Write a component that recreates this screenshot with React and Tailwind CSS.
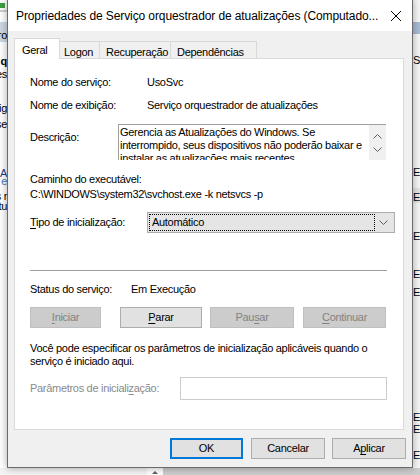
import React from "react";

const U = ({ children }) => <span className="underline underline-offset-[2px]">{children}</span>;

function Chevron({ up }) {
  return (
    <svg width="9" height="5" viewBox="0 0 9 5" className="block">
      <polyline
        points={up ? "0.5,4.5 4.5,0.5 8.5,4.5" : "0.5,0.5 4.5,4.5 8.5,0.5"}
        fill="none"
        stroke="#606060"
        strokeWidth="1"
      />
    </svg>
  );
}

export default function App() {
  return (
    <div className="relative w-[420px] h-[475px] overflow-hidden bg-white font-['Liberation_Sans',Arial,sans-serif] text-[11px] tracking-[-0.3px] text-black">
      {/* background behind the dialog: left strip */}
      <div className="absolute left-0 top-0 w-[7px] h-[475px] overflow-hidden bg-white">
        <div className="absolute left-0 top-[3px] w-[5px] h-[5px] bg-[#3f9f3f]" />
        <div className="absolute left-0 top-[10px] w-[7px] h-[2px] bg-[#d0d0d0]" />
        <div className="absolute left-0 top-[22px] w-[7px] h-[20px] bg-[#cfd8e2]" />
        <span className="absolute right-0 top-[27px] whitespace-nowrap">ro</span>
        <span className="absolute right-0 top-[53px] whitespace-nowrap font-bold">q</span>
        <span className="absolute right-0 top-[66px] whitespace-nowrap">es</span>
        <span className="absolute right-0 top-[100px] whitespace-nowrap">rig</span>
        <span className="absolute right-0 top-[116px] whitespace-nowrap">se</span>
        <span className="absolute right-0 top-[165px] whitespace-nowrap text-[#1a3c8c]">A</span>
        <span className="absolute right-0 top-[173px] whitespace-nowrap text-[#3c78c8]">e</span>
        <span className="absolute right-0 top-[188px] whitespace-nowrap">s r</span>
        <span className="absolute right-0 top-[198px] whitespace-nowrap">tu</span>
      </div>
      {/* right strip */}
      <div className="absolute right-0 top-0 w-[8px] h-[475px] overflow-hidden bg-[#f7f7f7]">
        <div className="absolute left-0 top-[22px] w-[8px] h-[12px] bg-[#a9bdd5]" />
        <span className="absolute left-[1px] top-[52px] whitespace-nowrap">St</span>
        <span className="absolute left-[1px] top-[164px] whitespace-nowrap">En</span>
        <div className="absolute left-0 top-[188px] w-[8px] h-[15px] bg-[#e5e5e5]" />
        <span className="absolute left-[1px] top-[189px] whitespace-nowrap">En</span>
        <span className="absolute left-[1px] top-[228px] whitespace-nowrap">En</span>
        <span className="absolute left-[1px] top-[266px] whitespace-nowrap">En</span>
        <span className="absolute left-[1px] top-[284px] whitespace-nowrap">En</span>
        <span className="absolute left-[1px] top-[409px] whitespace-nowrap">En</span>
        <span className="absolute left-[1px] top-[421px] whitespace-nowrap">En</span>
        <span className="absolute left-[1px] top-[447px] whitespace-nowrap">En</span>
        <span className="absolute left-[1px] top-[466px] whitespace-nowrap">En</span>
      </div>
      {/* bottom strip */}
      <div className="absolute left-0 top-[468px] w-[420px] h-[7px] flex">
        <div className="w-[147px] h-full bg-[#f4f4f4]" />
        <div className="w-[16px] h-full bg-white flex justify-center items-end">
          <div className="w-0 h-0 border-l-[3px] border-r-[3px] border-b-[3px] border-l-transparent border-r-transparent border-b-[#606060] mb-[1px]" />
        </div>
        <div className="flex-1 h-full bg-[#cdcdcd]" />
      </div>

      {/* dialog window */}
      <div className="absolute left-[7px] top-[-1px] w-[406px] h-[469px] border border-[#6b6b6b] bg-[#f0f0f0] shadow-[0_0_8px_rgba(0,0,0,0.35)] flex flex-col">
        {/* title bar */}
        <div className="h-[31px] bg-white flex items-center justify-between pl-[8px] pr-[11px] pt-[1px]">
          <span className="text-[12px] tracking-[-0.1px] whitespace-nowrap">
            Propriedades de Serviço orquestrador de atualizações (Computado...
          </span>
          <svg width="10" height="10" viewBox="0 0 10 10" className="block">
            <line x1="0" y1="0" x2="10" y2="10" stroke="#000" strokeWidth="1" />
            <line x1="10" y1="0" x2="0" y2="10" stroke="#000" strokeWidth="1" />
          </svg>
        </div>

        <div className="pl-[6px] pt-[7px] flex flex-col">
          {/* tabs */}
          <div className="flex items-end h-[20px]">
            <div className="relative z-10 h-[21px] -mb-[1px] w-[46px] bg-white border-t border-l border-r border-[#d9d9d9] pl-[7px] pt-[3px]">
              Geral
            </div>
            <div className="h-[17px] w-[40px] border-t border-r border-[#d9d9d9] pl-[4px] pt-[2px]">Logon</div>
            <div className="h-[17px] w-[71px] border-t border-r border-[#d9d9d9] pl-[6px] pt-[2px]">Recuperação</div>
            <div className="h-[17px] w-[86px] border-t border-r border-[#d9d9d9] pl-[6px] pt-[2px]">Dependências</div>
          </div>

          {/* panel */}
          <div className="w-[390px] h-[372px] bg-white border border-[#d9d9d9] pl-[15px] flex flex-col">
            <div className="mt-[16px] h-[14px] flex items-center">
              <span className="w-[117px]">Nome do serviço:</span>
              <span>UsoSvc</span>
            </div>
            <div className="mt-[9px] h-[14px] flex items-center">
              <span className="w-[117px]">Nome de exibição:</span>
              <span>Serviço orquestrador de atualizações</span>
            </div>
            <div className="mt-[12px] flex items-start">
              <span className="w-[88px] h-[14px] mt-[6px] flex items-center">Descrição:</span>
              <div className="w-[268px] h-[36px] border-t border-l border-[#a0a0a0] flex overflow-hidden">
                <div className="flex-1 pl-[1px] pt-[1px] leading-[13px] overflow-hidden">
                  Gerencia as Atualizações do Windows. Se
                  <br />
                  interrompido, seus dispositivos não poderão baixar e
                  <br />
                  instalar as atualizações mais recentes.
                </div>
                <div className="w-[17px] bg-[#f0f0f0] flex flex-col items-center pt-[9px] gap-[8px]">
                  <Chevron up />
                  <Chevron />
                </div>
              </div>
            </div>
            <div className="mt-[12px] h-[14px] flex items-center">Caminho do executável:</div>
            <div className="mt-[1px] h-[14px] flex items-center">C:\WINDOWS\system32\svchost.exe -k netsvcs -p</div>
            <div className="mt-[11px] flex items-center">
              <span className="w-[117px]">
                <U>T</U>ipo de inicialização:
              </span>
              <div className="w-[248px] h-[21px] bg-[#e5e5e5] border border-[#acacac] flex items-center pl-[1px] pr-[6px]">
                <div className="w-[226px] h-[17px] border border-dotted border-black flex items-center pl-[2px]">
                  Automático
                </div>
                <div className="flex-1 flex justify-end">
                  <Chevron />
                </div>
              </div>
            </div>
            <div className="mt-[37px] w-[357px] h-[1px] bg-[#a0a0a0]" />
            <div className="mt-[11px] h-[14px] flex items-center">
              <span className="w-[101px]">Status do serviço:</span>
              <span>Em Execução</span>
            </div>
            <div className="mt-[11px] flex h-[21px]">
              <div className="w-[71px] h-[21px] bg-[#cccccc] border border-[#bfbfbf] text-[#838383] flex items-center justify-center">
                <span><U>I</U>niciar</span>
              </div>
              <div className="ml-[19px] w-[82px] h-[21px] bg-[#e1e1e1] border border-[#adadad] flex items-center justify-center">
                <span><U>P</U>arar</span>
              </div>
              <div className="ml-[8px] w-[84px] h-[21px] bg-[#cccccc] border border-[#bfbfbf] text-[#838383] flex items-center justify-center">
                <span>Pau<U>s</U>ar</span>
              </div>
              <div className="ml-[9px] w-[83px] h-[21px] bg-[#cccccc] border border-[#bfbfbf] text-[#838383] flex items-center justify-center">
                <span><U>C</U>ontinuar</span>
              </div>
            </div>
            <div className="mt-[14px] leading-[13px]">
              Você pode especificar os parâmetros de inicialização aplicáveis quando o
              <br />
              serviço é iniciado aqui.
            </div>
            <div className="mt-[9px] flex items-center">
              <span className="w-[150px] text-[#8a8a8a]">
                Parâmetros de iniciali<U>z</U>ação:
              </span>
              <div className="w-[207px] h-[23px] border border-[#cccccc] bg-white" />
            </div>
          </div>

          {/* dialog buttons */}
          <div className="mt-[8px] flex pl-[156px]">
            <div className="w-[73px] h-[21px] bg-[#e1e1e1] border-2 border-[#0078d7] flex items-center justify-center">
              OK
            </div>
            <div className="ml-[8px] w-[74px] h-[21px] bg-[#e1e1e1] border border-[#adadad] flex items-center justify-center">
              Cancelar
            </div>
            <div className="ml-[7px] w-[74px] h-[21px] bg-[#e1e1e1] border border-[#adadad] flex items-center justify-center">
              <span>A<U>p</U>licar</span>
            </div>
          </div>
        </div>
      </div>
    </div>
  );
}
